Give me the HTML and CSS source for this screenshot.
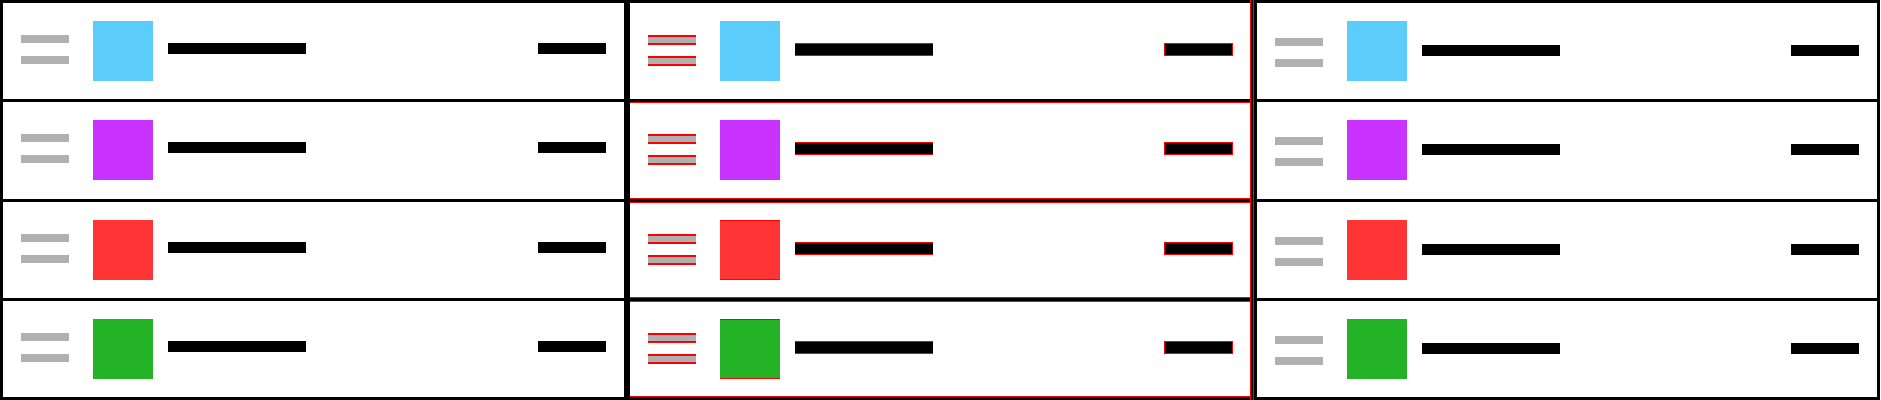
FILE: index.html
```html
<!DOCTYPE html>
<html lang="en">
<head>
<meta charset="utf-8">
<title>Lists</title>
<link rel="stylesheet" href="styles.css">
</head>
<body>
<div class="board">
  <div class="panel">
    <div class="row"><div class="grip"><span class="grip__bar"></span><span class="grip__bar"></span></div><div class="swatch swatch--blue"></div><div class="title"></div><div class="meta"></div></div>
    <div class="row"><div class="grip"><span class="grip__bar"></span><span class="grip__bar"></span></div><div class="swatch swatch--purple"></div><div class="title"></div><div class="meta"></div></div>
    <div class="row"><div class="grip"><span class="grip__bar"></span><span class="grip__bar"></span></div><div class="swatch swatch--red"></div><div class="title"></div><div class="meta"></div></div>
    <div class="row"><div class="grip"><span class="grip__bar"></span><span class="grip__bar"></span></div><div class="swatch swatch--green"></div><div class="title"></div><div class="meta"></div></div>
  </div>
  <div class="panel panel--diff">
    <div class="row"><div class="grip"><span class="grip__bar"></span><span class="grip__bar"></span></div><div class="swatch swatch--blue"></div><div class="title"></div><div class="meta"></div></div>
    <div class="row"><div class="grip"><span class="grip__bar"></span><span class="grip__bar"></span></div><div class="swatch swatch--purple"></div><div class="title"></div><div class="meta"></div></div>
    <div class="row"><div class="grip"><span class="grip__bar"></span><span class="grip__bar"></span></div><div class="swatch swatch--red"></div><div class="title"></div><div class="meta"></div></div>
    <div class="row"><div class="grip"><span class="grip__bar"></span><span class="grip__bar"></span></div><div class="swatch swatch--green"></div><div class="title"></div><div class="meta"></div></div>
  </div>
  <div class="panel panel--shift">
    <div class="row"><div class="grip"><span class="grip__bar"></span><span class="grip__bar"></span></div><div class="swatch swatch--blue"></div><div class="title"></div><div class="meta"></div></div>
    <div class="row"><div class="grip"><span class="grip__bar"></span><span class="grip__bar"></span></div><div class="swatch swatch--purple"></div><div class="title"></div><div class="meta"></div></div>
    <div class="row"><div class="grip"><span class="grip__bar"></span><span class="grip__bar"></span></div><div class="swatch swatch--red"></div><div class="title"></div><div class="meta"></div></div>
    <div class="row"><div class="grip"><span class="grip__bar"></span><span class="grip__bar"></span></div><div class="swatch swatch--green"></div><div class="title"></div><div class="meta"></div></div>
  </div>
</div>
</body>
</html>
```
FILE: styles.css
```css
* { box-sizing: border-box; }
html, body { margin: 0; padding: 0; background: #fff; }
body {
  font-family: "Liberation Sans", Arial, sans-serif;
  width: 1881px;
  height: 400px;
  overflow: hidden;
}
.board {
  display: grid;
  grid-template-columns: 627px 627px 626px;
  height: 400px;
}
.panel {
  position: relative;
  display: flex;
  flex-direction: column;
  border: 3px solid #000;
}
.row {
  flex: 1 1 0;
  min-height: 0;
  display: flex;
  align-items: flex-start;
  padding: 18px 18px 0 18px;
  border-bottom: 3px solid #000;
}
.row:last-child { border-bottom: 0; }
.grip {
  display: flex;
  flex-direction: column;
  gap: 13px;
  width: 48px;
  margin-top: 14px;
}
.grip__bar {
  display: block;
  height: 8px;
  background: #b0b0b0;
}
.swatch {
  width: 60px;
  height: 60px;
  margin-left: 24px;
  flex: none;
}
.swatch--blue { background: #5ccdfa; }
.swatch--purple { background: #ca32ff; }
.swatch--red { background: #ff3535; }
.swatch--green { background: #24b327; }
.title {
  width: 138px;
  height: 11px;
  background: #000;
  margin: 22px 0 0 15px;
}
.meta {
  width: 68px;
  height: 11px;
  background: #000;
  margin: 22px 0 0 auto;
}

/* middle panel: overlaid outline marks */
.panel--diff::before,
.panel--diff::after {
  content: "";
  position: absolute;
  top: -3px;
  bottom: -3px;
  width: 1px;
  background: #ff0000;
}
.panel--diff::before { right: 0; }
.panel--diff::after { right: -3px; }
.panel--diff .row + .row {
  box-shadow: inset 0 1px 0 #ff0000, inset 0 -1px 0 #ff0000;
}
.panel--diff .grip { gap: 11px; }
.panel--diff .grip__bar {
  height: 10px;
  border-top: 2px solid #ff0000;
  border-bottom: 2px solid #ff0000;
}
.panel--diff .row:nth-child(n+3) .swatch {
  box-shadow: inset 0 1px 0 #ff0000, inset 0 -1px 0 #ff0000;
}
.panel--diff .title {
  height: 13px;
  border-top: 1px solid #ff0000;
  border-bottom: 1px solid #ff0000;
}
.panel--diff .meta {
  width: 69px;
  height: 13px;
  border: 1px solid #ff0000;
}

/* right panel: text sits slightly lower */
.panel--shift .grip { margin-top: 17px; }
.panel--shift .title,
.panel--shift .meta { margin-top: 24px; }
```
